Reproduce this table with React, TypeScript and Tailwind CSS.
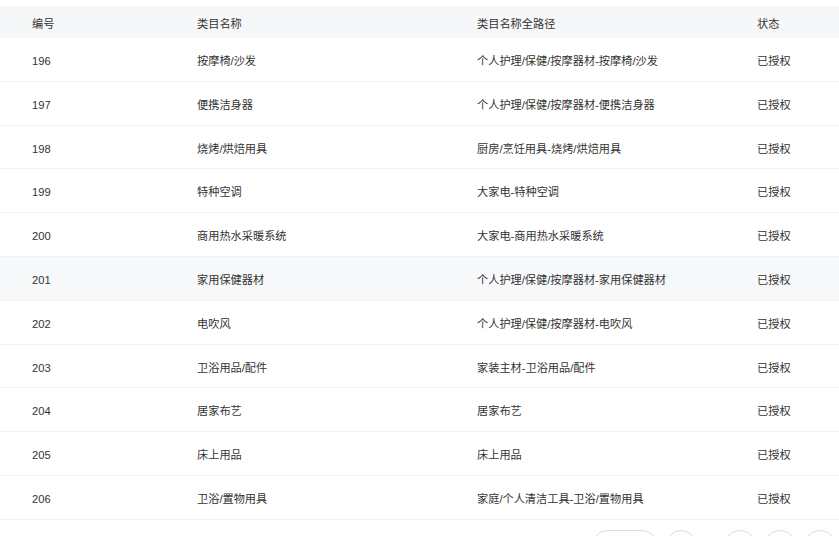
const rows = [
  { id: 196, name: "按摩椅/沙发", path: "个人护理/保健/按摩器材-按摩椅/沙发" },
  { id: 197, name: "便携洁身器", path: "个人护理/保健/按摩器材-便携洁身器" },
  { id: 198, name: "烧烤/烘焙用具", path: "厨房/烹饪用具-烧烤/烘焙用具" },
  { id: 199, name: "特种空调", path: "大家电-特种空调" },
  { id: 200, name: "商用热水采暖系统", path: "大家电-商用热水采暖系统" },
  { id: 201, name: "家用保健器材", path: "个人护理/保健/按摩器材-家用保健器材", hover: true },
  { id: 202, name: "电吹风", path: "个人护理/保健/按摩器材-电吹风" },
  { id: 203, name: "卫浴用品/配件", path: "家装主材-卫浴用品/配件" },
  { id: 204, name: "居家布艺", path: "居家布艺" },
  { id: 205, name: "床上用品", path: "床上用品" },
  { id: 206, name: "卫浴/置物用具", path: "家庭/个人清洁工具-卫浴/置物用具" },
];

const cols = "grid grid-cols-[165px_280px_280px_1fr] pl-[32px] pt-[4px] items-center";

export default function App() {
  return (
    <div
      className="w-[839px] h-[536px] overflow-hidden bg-white text-[11.2px] text-[#333]"
      style={{ fontFamily: '"Liberation Sans", "Noto Sans CJK SC", sans-serif' }}
    >
      <div className="pt-[6px]">
        {/* Header */}
        <div className={`${cols} h-[32px] bg-[#f6f7f9]`}>
          <div>编号</div>
          <div>类目名称</div>
          <div>类目名称全路径</div>
          <div>状态</div>
        </div>

        {/* Rows */}
        {rows.map((row) => (
          <div
            key={row.id}
            className={`${cols} h-[43.8px] border-b border-[#f0f1f3] ${row.hover ? "bg-[#f7f8fa]" : "bg-white"}`}
          >
            <div>{row.id}</div>
            <div>{row.name}</div>
            <div>{row.path}</div>
            <div>已授权</div>
          </div>
        ))}

        {/* Pagination */}
        <div className="flex items-start pl-[592px] pt-[10px] gap-[8px]">
          <div className="w-[66px] h-[32px] rounded-full border border-[#dcdcdc]" />
          <div className="w-[30px] h-[32px] rounded-full border border-[#dcdcdc]" />
          <div className="w-[12px] h-[32px]" />
          <div className="w-[32px] h-[32px] rounded-full border border-[#dcdcdc]" />
          <div className="w-[32px] h-[32px] rounded-full border border-[#dcdcdc]" />
          <div className="w-[32px] h-[32px] rounded-full border border-[#dcdcdc]" />
        </div>
      </div>
    </div>
  );
}
